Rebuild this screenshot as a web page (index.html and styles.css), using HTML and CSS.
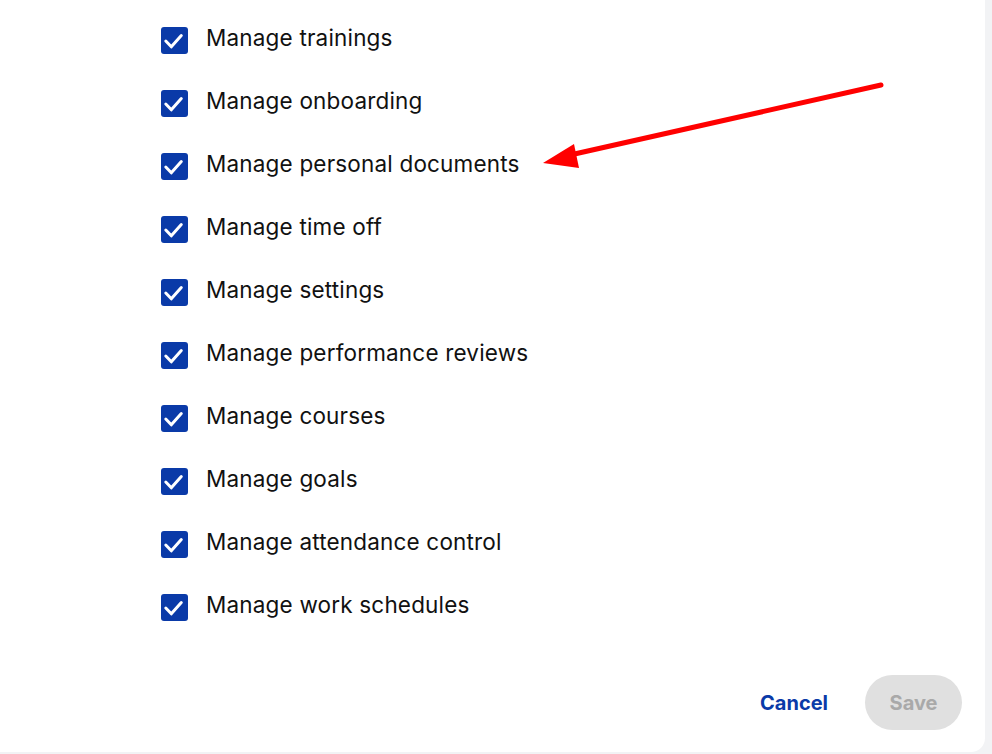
FILE: index.html
```html
<!DOCTYPE html>
<html lang="en">
<head>
<meta charset="utf-8">
<link rel="stylesheet" href="styles.css">
</head>
<body>
<div class="panel">
  <ul class="perm-list">
    <li class="perm"><span class="box"><svg viewBox="0 0 27 27"><path d="M4.8 14l5.5 5.8 10-11.2" /></svg></span><span class="label">Manage trainings</span></li>
    <li class="perm"><span class="box"><svg viewBox="0 0 27 27"><path d="M4.8 14l5.5 5.8 10-11.2" /></svg></span><span class="label">Manage onboarding</span></li>
    <li class="perm"><span class="box"><svg viewBox="0 0 27 27"><path d="M4.8 14l5.5 5.8 10-11.2" /></svg></span><span class="label">Manage personal documents</span></li>
    <li class="perm"><span class="box"><svg viewBox="0 0 27 27"><path d="M4.8 14l5.5 5.8 10-11.2" /></svg></span><span class="label">Manage time off</span></li>
    <li class="perm"><span class="box"><svg viewBox="0 0 27 27"><path d="M4.8 14l5.5 5.8 10-11.2" /></svg></span><span class="label">Manage settings</span></li>
    <li class="perm"><span class="box"><svg viewBox="0 0 27 27"><path d="M4.8 14l5.5 5.8 10-11.2" /></svg></span><span class="label">Manage performance reviews</span></li>
    <li class="perm"><span class="box"><svg viewBox="0 0 27 27"><path d="M4.8 14l5.5 5.8 10-11.2" /></svg></span><span class="label">Manage courses</span></li>
    <li class="perm"><span class="box"><svg viewBox="0 0 27 27"><path d="M4.8 14l5.5 5.8 10-11.2" /></svg></span><span class="label">Manage goals</span></li>
    <li class="perm"><span class="box"><svg viewBox="0 0 27 27"><path d="M4.8 14l5.5 5.8 10-11.2" /></svg></span><span class="label">Manage attendance control</span></li>
    <li class="perm"><span class="box"><svg viewBox="0 0 27 27"><path d="M4.8 14l5.5 5.8 10-11.2" /></svg></span><span class="label">Manage work schedules</span></li>
  </ul>
  <div class="footer">
    <button class="btn-cancel">Cancel</button>
    <button class="btn-save" disabled>Save</button>
  </div>
  <svg class="arrow" width="992" height="754" viewBox="0 0 992 754">
    <line x1="881" y1="85" x2="570" y2="155" />
    <polygon points="543,163 574,144 579,168" />
  </svg>
</div>
</body>
</html>
```

FILE: styles.css
```css
html, body {
  margin: 0;
  padding: 0;
}
body {
  background: #f2f3f5;
  font-family: Inter, "Noto Sans", sans-serif;
  width: 992px;
  height: 754px;
  overflow: hidden;
}
.panel {
  position: relative;
  width: 985px;
  height: 752px;
  background: #ffffff;
  border-bottom-right-radius: 14px;
  box-sizing: border-box;
  display: flex;
  flex-direction: column;
}
.perm-list {
  list-style: none;
  margin: 0;
  padding: 9px 0 0 160px;
}
.perm {
  height: 63px;
  display: flex;
  align-items: center;
  gap: 18px;
}
.box {
  width: 27px;
  height: 27px;
  border-radius: 3px;
  background: #0a3aa8;
  display: flex;
  flex-shrink: 0;
  margin-left: 1px;
}
.box svg {
  width: 27px;
  height: 27px;
  fill: none;
  stroke: #ffffff;
  stroke-width: 3;
  stroke-linecap: round;
  stroke-linejoin: round;
}
.label {
  font-size: 22.5px;
  color: #111111;
  letter-spacing: 0.18px;
  margin-bottom: 7px;
}
.footer {
  margin-top: auto;
  display: flex;
  justify-content: flex-end;
  align-items: center;
  gap: 21px;
  padding: 0 23px 22px 0;
}
.btn-cancel {
  border: none;
  background: none;
  font-family: inherit;
  font-size: 20px;
  font-weight: 700;
  color: #0a3aa8;
  padding: 0 16px;
  height: 55px;
}
.btn-save {
  border: none;
  background: #e0e0e0;
  border-radius: 28px;
  width: 97px;
  height: 55px;
  font-family: inherit;
  font-size: 20px;
  font-weight: 700;
  color: #a9a9a9;
}
.arrow {
  position: absolute;
  left: 0;
  top: 0;
  pointer-events: none;
}
.arrow line {
  stroke: #ff0000;
  stroke-width: 5;
  stroke-linecap: round;
}
.arrow polygon {
  fill: #ff0000;
}
```
